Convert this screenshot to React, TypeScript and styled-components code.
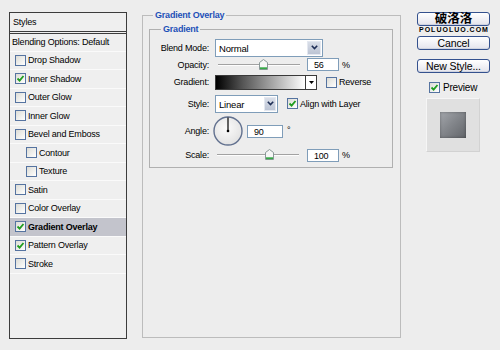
import React from "react";
import styled, { createGlobalStyle } from "styled-components";

const GlobalStyle = createGlobalStyle`
  html, body {
    margin: 0;
    padding: 0;
    background: #ededed;
  }
  body {
    font-family: "Liberation Sans", Arial, sans-serif;
    font-size: 9px;
    letter-spacing: -0.2px;
    color: #000;
  }
`;

type StyleItem = {
  name: string;
  checked?: boolean;
  indent?: boolean;
  active?: boolean;
};

const STYLE_ITEMS: StyleItem[] = [
  { name: "Drop Shadow" },
  { name: "Inner Shadow", checked: true },
  { name: "Outer Glow" },
  { name: "Inner Glow" },
  { name: "Bevel and Emboss" },
  { name: "Contour", indent: true },
  { name: "Texture", indent: true },
  { name: "Satin" },
  { name: "Color Overlay" },
  { name: "Gradient Overlay", checked: true, active: true },
  { name: "Pattern Overlay", checked: true },
  { name: "Stroke" },
];

const Dialog = styled.div`
  width: 500px;
  height: 350px;
  box-sizing: border-box;
  padding: 9px 0 0 9px;
  display: flex;
  align-items: flex-start;
  background: #ededed;
  overflow: hidden;
`;

/* ---------- left list ---------- */

const StylesList = styled.div`
  margin-top: 3px;
  width: 118px;
  height: 327px;
  box-sizing: border-box;
  border: 1px solid #3c3c3c;
  background: #efefef;
  display: flex;
  flex-direction: column;
`;

const ListHeader = styled.div`
  height: 18px;
  line-height: 18px;
  padding-left: 3px;
  border-bottom: 3px double #3c3c3c;
`;

const BlendingRow = styled.div`
  height: 17.6px;
  line-height: 17px;
  padding-left: 2px;
  box-sizing: border-box;
  border-bottom: 1px solid #fafafa;
`;

const ListRow = styled.div<{ $indent?: boolean; $active?: boolean }>`
  height: 18.5px;
  box-sizing: border-box;
  display: flex;
  align-items: center;
  gap: 2px;
  padding-left: ${(p) => (p.$indent ? 16 : 5)}px;
  border-bottom: 1px solid #fafafa;
  background: ${(p) => (p.$active ? "#c3c4cc" : "transparent")};
  font-weight: ${(p) => (p.$active ? "bold" : "normal")};
`;

/* ---------- checkbox ---------- */

const Box = styled.span`
  display: inline-flex;
  align-items: center;
  justify-content: center;
  width: 11px;
  height: 11px;
  box-sizing: border-box;
  border: 1px solid #5573a0;
  background: linear-gradient(135deg, #dcdcd6, #ffffff);
  flex: none;
`;

const Checkbox = ({ checked }: { checked?: boolean }) => (
  <Box>
    {checked && (
      <svg width="9" height="9" viewBox="0 0 9 9">
        <path d="M1.5 4.5 L3.6 6.6 L7.5 2" fill="none" stroke="#1f9d1f" strokeWidth="1.8" />
      </svg>
    )}
  </Box>
);

/* ---------- group boxes ---------- */

const Group = styled.fieldset`
  margin: 0 0 0 15px;
  width: 259px;
  height: 329px;
  box-sizing: border-box;
  border: 1px solid #bcbcbc;
  padding: 2px 7px 0 6px;
  min-width: 0;
`;

const SubGroup = styled.fieldset`
  margin: 0;
  width: 244px;
  height: 145px;
  box-sizing: border-box;
  border: 1px solid #b0b0b0;
  padding: 3px 0 0 0;
  min-width: 0;
`;

const Legend = styled.legend<{ $offset: number }>`
  color: #1d50b8;
  font-weight: bold;
  line-height: 12px;
  padding: 0 2px;
  margin-left: ${(p) => p.$offset}px;
`;

const FieldRow = styled.div<{ $h: number }>`
  height: ${(p) => p.$h}px;
  display: grid;
  grid-template-columns: 59px 1fr;
  column-gap: 6px;
  align-items: center;
`;

const Label = styled.span`
  text-align: right;
`;

const Controls = styled.div`
  display: flex;
  align-items: center;
`;

/* ---------- select ---------- */

const Select = styled.div<{ $w: number }>`
  width: ${(p) => p.$w}px;
  height: 18px;
  box-sizing: border-box;
  border: 1px solid #7f9db9;
  background: #fff;
  display: flex;
  align-items: stretch;
`;

const SelectText = styled.span`
  flex: 1;
  padding: 3px 0 0 3px;
  font-size: 9.5px;
`;

const SelectArrow = styled.span<{ $w: number }>`
  width: ${(p) => p.$w}px;
  margin: 1px;
  box-sizing: border-box;
  border: 1px solid #e4e8f0;
  background: linear-gradient(#d9dee8, #bcc4d4);
  display: flex;
  align-items: center;
  justify-content: center;
`;

const Dropdown = ({ value, width, arrow }: { value: string; width: number; arrow: number }) => (
  <Select $w={width}>
    <SelectText>{value}</SelectText>
    <SelectArrow $w={arrow}>
      <svg width="7" height="5" viewBox="0 0 7 5">
        <path d="M0.8 0.8 L3.5 3.6 L6.2 0.8" fill="none" stroke="#1e2e55" strokeWidth="1.6" />
      </svg>
    </SelectArrow>
  </Select>
);

/* ---------- inputs / sliders ---------- */

const NumberInput = styled.span<{ $w: number; $ml: number }>`
  display: inline-block;
  width: ${(p) => p.$w}px;
  height: 13px;
  margin-left: ${(p) => p.$ml}px;
  box-sizing: border-box;
  border: 1px solid #7f9db9;
  background: #fff;
  padding: 2px 0 0 6px;
  line-height: 9px;
`;

const Unit = styled.span<{ $ml: number; $up?: boolean }>`
  margin-left: ${(p) => p.$ml}px;
  align-self: ${(p) => (p.$up ? "flex-start" : "center")};
  margin-top: ${(p) => (p.$up ? 9 : 0)}px;
`;

const SliderTrack = styled.div<{ $w: number; $ml: number }>`
  position: relative;
  width: ${(p) => p.$w}px;
  margin-left: ${(p) => p.$ml}px;
  height: 2px;
  box-sizing: border-box;
  border-top: 1px solid #a2a2a2;
  border-bottom: 1px solid #fdfdfd;
`;

const Thumb = styled.svg`
  position: absolute;
  top: -6px;
  margin-left: -4.5px;
`;

const Slider = ({ pos, width, ml }: { pos: number; width: number; ml: number }) => (
  <SliderTrack $w={width} $ml={ml}>
    <Thumb width="9" height="11" viewBox="0 0 9 11" style={{ left: `${pos}%` }}>
      <path d="M0.5 3.5 L4.5 0.5 L8.5 3.5 V10.5 H0.5 Z" fill="#f6f6f6" stroke="#8a9898" />
      <rect x="1" y="8.3" width="7" height="1.8" fill="#36a846" />
    </Thumb>
  </SliderTrack>
);

const GradientPicker = styled.div`
  width: 102px;
  height: 15px;
  box-sizing: border-box;
  border: 1px solid #3a3a3a;
  display: flex;
`;

const GradientFill = styled.div`
  flex: 1;
  background: linear-gradient(to right, #000 0%, #555 30%, #fff 100%);
`;

const GradientArrow = styled.div`
  width: 10px;
  border-left: 1px solid #3a3a3a;
  background: #fff;
  display: flex;
  align-items: center;
  justify-content: center;
`;

const CheckLabel = styled.label<{ $ml: number }>`
  display: flex;
  align-items: center;
  gap: 2px;
  margin-left: ${(p) => p.$ml}px;
`;

const Dial = ({ angle }: { angle: number }) => {
  const rad = (angle * Math.PI) / 180;
  const x = 15 + 13.5 * Math.cos(rad);
  const y = 15 - 13.5 * Math.sin(rad);
  return (
    <svg width="31" height="31" viewBox="0 0 31 31" style={{ marginLeft: -2 }}>
      <defs>
        <radialGradient id="dialFill" cx="45%" cy="40%" r="60%">
          <stop offset="0%" stopColor="#fbfbfb" />
          <stop offset="100%" stopColor="#e2e2e2" />
        </radialGradient>
      </defs>
      <circle cx="15" cy="15" r="14" fill="url(#dialFill)" stroke="#62718f" strokeWidth="1.4" />
      <line x1="15" y1="15" x2={x} y2={y} stroke="#000" strokeWidth="1.2" />
      <circle cx="15" cy="15" r="1.3" fill="#000" />
    </svg>
  );
};

/* ---------- right column ---------- */

const Side = styled.div`
  margin: 3px 0 0 16px;
  width: 73px;
  display: flex;
  flex-direction: column;
`;

const ButtonWrap = styled.div`
  position: relative;
`;

const Button = styled.div<{ $mt?: number }>`
  height: 14px;
  margin-top: ${(p) => p.$mt ?? 0}px;
  box-sizing: border-box;
  border: 1px solid #34518e;
  border-radius: 3px;
  background: linear-gradient(#ffffff, #e4e4ec);
  box-shadow: inset 0 -1px 0 #d0d4e0;
  font-size: 10.5px;
  line-height: 12px;
  text-align: center;
  letter-spacing: -0.1px;
`;

const OkText = styled.span`
  font-family: "Noto Sans CJK SC", "Noto Sans CJK TC", sans-serif;
  font-weight: bold;
  font-size: 12.5px;
  letter-spacing: 0;
  position: relative;
  top: -1px;
`;

const Watermark = styled.div`
  position: absolute;
  left: 2px;
  top: 15px;
  font-family: "Liberation Sans", Arial, sans-serif;
  font-weight: bold;
  font-size: 7px;
  line-height: 6px;
  letter-spacing: 1px;
  color: #000;
`;

const PreviewToggle = styled.label`
  margin: 9px 0 0 12px;
  display: flex;
  align-items: center;
  gap: 3px;
  font-size: 10px;
  height: 11px;
`;

const PreviewBox = styled.div`
  margin: 5px 0 0 9px;
  width: 54px;
  height: 54px;
  box-sizing: border-box;
  border: 1px solid #d2d2d2;
  border-top-color: #f6f6f6;
  border-left-color: #f6f6f6;
  background: #e0e0e0;
  display: flex;
  align-items: center;
  justify-content: center;
`;

const PreviewSwatch = styled.div`
  width: 26px;
  height: 26px;
  background: linear-gradient(135deg, #a3a6ab 0%, #84878c 45%, #62656a 100%);
  box-shadow: inset 0 0 3px rgba(0, 0, 0, 0.35);
`;

export default function App() {
  return (
    <>
      <GlobalStyle />
      <Dialog>
        <StylesList>
          <ListHeader>Styles</ListHeader>
          <BlendingRow>Blending Options: Default</BlendingRow>
          {STYLE_ITEMS.map((item) => (
            <ListRow key={item.name} $indent={item.indent} $active={item.active}>
              <Checkbox checked={item.checked} />
              <span>{item.name}</span>
            </ListRow>
          ))}
        </StylesList>

        <Group>
          <Legend $offset={4}>Gradient Overlay</Legend>
          <SubGroup>
            <Legend $offset={11}>Gradient</Legend>
            <FieldRow $h={19}>
              <Label>Blend Mode:</Label>
              <Controls>
                <Dropdown value="Normal" width={108} arrow={14} />
              </Controls>
            </FieldRow>
            <FieldRow $h={15}>
              <Label>Opacity:</Label>
              <Controls>
                <Slider pos={56} width={82} ml={3} />
                <NumberInput $w={32} $ml={7}>56</NumberInput>
                <Unit $ml={3}>%</Unit>
              </Controls>
            </FieldRow>
            <FieldRow $h={20}>
              <Label>Gradient:</Label>
              <Controls>
                <GradientPicker>
                  <GradientFill />
                  <GradientArrow>
                    <svg width="5" height="3" viewBox="0 0 5 3">
                      <path d="M0 0 H5 L2.5 3 Z" fill="#000" />
                    </svg>
                  </GradientArrow>
                </GradientPicker>
                <CheckLabel $ml={9}>
                  <Checkbox />
                  <span>Reverse</span>
                </CheckLabel>
              </Controls>
            </FieldRow>
            <FieldRow $h={23}>
              <Label>Style:</Label>
              <Controls>
                <Dropdown value="Linear" width={63} arrow={12} />
                <CheckLabel $ml={9}>
                  <Checkbox checked />
                  <span>Align with Layer</span>
                </CheckLabel>
              </Controls>
            </FieldRow>
            <FieldRow $h={32}>
              <Label>Angle:</Label>
              <Controls>
                <Dial angle={90} />
                <NumberInput $w={36} $ml={3}>90</NumberInput>
                <Unit $ml={4} $up>°</Unit>
              </Controls>
            </FieldRow>
            <FieldRow $h={16}>
              <Label>Scale:</Label>
              <Controls>
                <Slider pos={64} width={82} ml={2} />
                <NumberInput $w={32} $ml={8}>100</NumberInput>
                <Unit $ml={3}>%</Unit>
              </Controls>
            </FieldRow>
          </SubGroup>
        </Group>

        <Side>
          <ButtonWrap>
            <Button>
              <OkText>破洛洛</OkText>
            </Button>
            <Watermark>POLUOLUO.COM</Watermark>
          </ButtonWrap>
          <Button $mt={10}>Cancel</Button>
          <Button $mt={9}>New Style...</Button>
          <PreviewToggle>
            <Checkbox checked />
            <span>Preview</span>
          </PreviewToggle>
          <PreviewBox>
            <PreviewSwatch />
          </PreviewBox>
        </Side>
      </Dialog>
    </>
  );
}
